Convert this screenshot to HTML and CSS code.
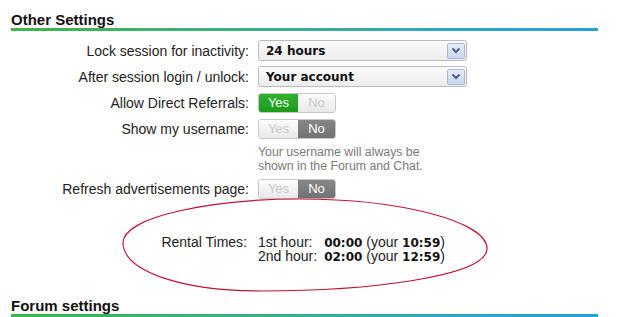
FILE: index.html
```html
<!DOCTYPE html>
<html>
<head>
<meta charset="utf-8">
<link rel="stylesheet" href="styles.css">
</head>
<body>
<div class="page">
  <h2 class="section-title first">Other Settings</h2>
  <div class="form">
    <div class="label">Lock session for inactivity:</div>
    <div class="control">
      <div class="select"><span class="select-text">24 hours</span><span class="arrow"><svg width="10" height="7" viewBox="0 0 10 7"><path d="M1.5 1.5 L5 5 L8.5 1.5" fill="none" stroke="#4a5f86" stroke-width="2"/></svg></span></div>
    </div>
    <div class="label">After session login / unlock:</div>
    <div class="control">
      <div class="select"><span class="select-text">Your account</span><span class="arrow"><svg width="10" height="7" viewBox="0 0 10 7"><path d="M1.5 1.5 L5 5 L8.5 1.5" fill="none" stroke="#4a5f86" stroke-width="2"/></svg></span></div>
    </div>
    <div class="label">Allow Direct Referrals:</div>
    <div class="control">
      <div class="toggle"><span class="seg yes on-green">Yes</span><span class="seg no">No</span></div>
    </div>
    <div class="label">Show my username:</div>
    <div class="control">
      <div class="toggle"><span class="seg yes">Yes</span><span class="seg no on-gray">No</span></div>
    </div>
    <div class="label"></div>
    <div class="hint">Your username will always be<br>shown in the Forum and Chat.</div>
    <div class="label">Refresh advertisements page:</div>
    <div class="control">
      <div class="toggle"><span class="seg yes">Yes</span><span class="seg no on-gray">No</span></div>
    </div>
  </div>
  <div class="rental">
    <div class="rental-label">Rental Times:</div>
    <div class="rental-values">
      <span class="hr">1st hour:</span><span class="val"><b>00:00</b> (your <b>10:59</b>)</span>
      <span class="hr">2nd hour:</span><span class="val"><b>02:00</b> (your <b>12:59</b>)</span>
    </div>
  </div>
  <h2 class="section-title">Forum settings</h2>
  <svg class="annotation" width="620" height="317" viewBox="0 0 620 317">
    <path d="M123 244 C121 216, 215 199, 300 199 C398 199, 488 221, 487 249 C486 277, 365 291, 262 291 C180 291, 125 271, 123 244 Z" fill="none" stroke="#c4122f" stroke-width="1.2"/>
  </svg>
</div>
</body>
</html>
```

FILE: styles.css
```css
html, body {
  margin: 0;
  padding: 0;
  background: #fff;
}

.page {
  position: relative;
  width: 620px;
  height: 317px;
  overflow: hidden;
  font-family: "Liberation Sans", Arial, sans-serif;
  color: #222;
}

.section-title {
  margin: 34px 0 0 11px;
  width: 587px;
  font-size: 15px;
  line-height: 17px;
  font-weight: bold;
  color: #111;
}

.section-title.first {
  margin-top: 11px;
}

.section-title::after {
  content: "";
  display: block;
  height: 3px;
  background: linear-gradient(to right, #3db649 0%, #3aae86 45%, #2fa5c6 75%, #27a0d8 100%);
}

.form {
  margin-top: 9px;
  display: grid;
  grid-template-columns: 249px 1fr;
  column-gap: 9px;
  row-gap: 5px;
}

.label {
  font-size: 14px;
  text-align: right;
  display: flex;
  align-items: center;
  justify-content: flex-end;
  height: 21px;
}

.control {
  height: 21px;
  display: flex;
  align-items: center;
}

.select {
  box-sizing: border-box;
  width: 209px;
  height: 21px;
  border: 1px solid #bcbcbc;
  border-radius: 3px;
  background: linear-gradient(#fbfbfb, #ececec);
  display: flex;
  align-items: center;
  justify-content: space-between;
  padding: 0 1px 0 7px;
}

.select-text {
  font-family: "DejaVu Sans", Verdana, sans-serif;
  font-weight: bold;
  font-size: 12px;
  color: #111;
}

.arrow {
  box-sizing: border-box;
  width: 18px;
  height: 16px;
  border: 1px solid #a6b9d6;
  border-radius: 2px;
  background: linear-gradient(#e6eef9, #c9d7ec);
  display: flex;
  align-items: center;
  justify-content: center;
}

.toggle {
  display: flex;
  height: 20px;
  box-sizing: border-box;
  border: 1px solid #c8c8c8;
  border-radius: 3px;
  overflow: hidden;
}

.seg {
  display: flex;
  align-items: center;
  justify-content: center;
  font-size: 13px;
  color: #c8c8c8;
  background: linear-gradient(#fcfcfc, #e9e9e9);
}

.seg.yes { width: 39px; }
.seg.no { width: 37px; }

.seg.on-green {
  background: linear-gradient(#2fb12f, #1c9a1c);
  color: #fff;
}

.seg.on-gray {
  background: linear-gradient(#878787, #727272);
  color: #fff;
}

.hint {
  font-size: 12.3px;
  line-height: 14px;
  color: #7a7a7a;
  padding-top: 1px;
}

.rental {
  margin-top: 36px;
  display: grid;
  grid-template-columns: 247px 1fr;
  column-gap: 11px;
  font-size: 14px;
  line-height: 14px;
}

.rental-label {
  text-align: right;
  color: #222;
  height: 14px;
}

.rental-values {
  display: grid;
  grid-template-columns: auto auto;
  grid-auto-rows: 14px;
  justify-content: start;
  column-gap: 7px;
}

.rental-values span {
  height: 14px;
  white-space: nowrap;
}

.rental-values b {
  font-family: "DejaVu Sans", Verdana, sans-serif;
  font-size: 12px;
  line-height: 12px;
  color: #111;
}

.annotation {
  position: absolute;
  left: 0;
  top: 0;
  pointer-events: none;
}
```
